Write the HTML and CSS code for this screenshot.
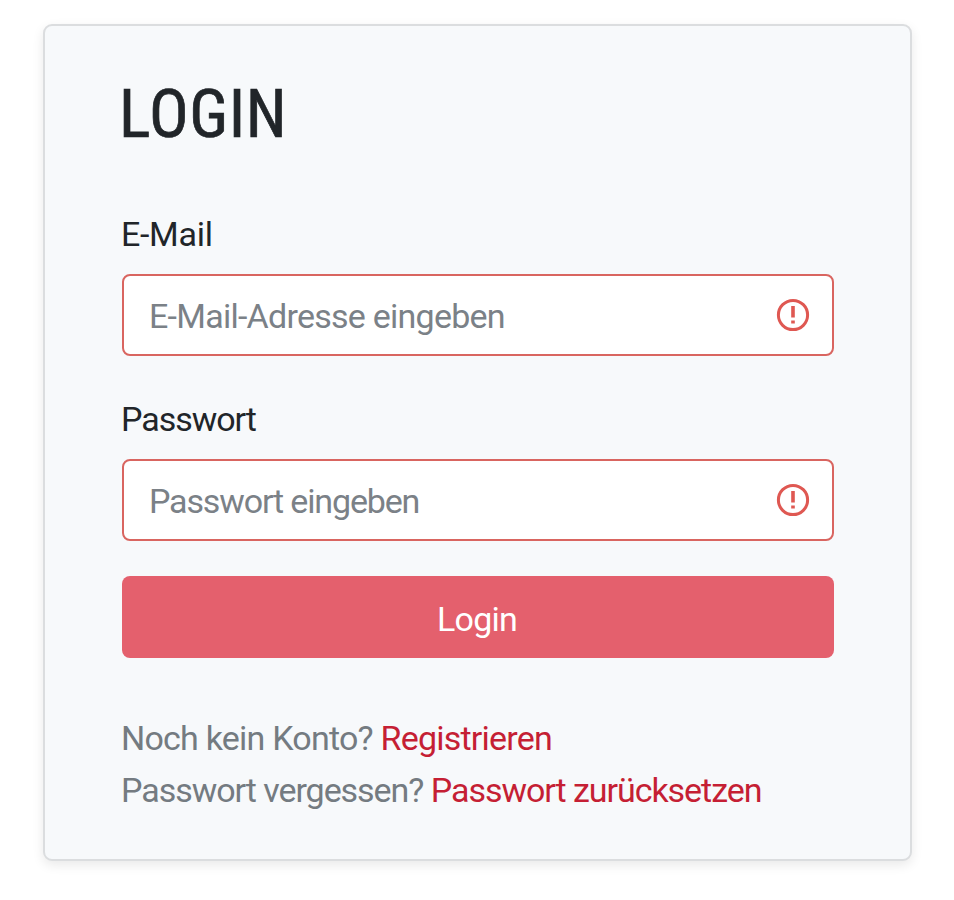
FILE: index.html
```html
<!DOCTYPE html>
<html lang="de">
<head>
    <meta charset="UTF-8">
    <meta name="viewport" content="width=device-width, initial-scale=1.0">
    <title>Login</title>
    <link rel="stylesheet" href="styles.css">
</head>
<body>
    <div class="card">
        <h1>LOGIN</h1>
        <form id="loginForm" novalidate>
            <label for="email" class="email-label">E-Mail</label>
            <div class="field invalid">
                <input type="email" id="email" placeholder="E-Mail-Adresse eingeben">
                <svg class="error-icon" viewBox="0 0 34 34" aria-hidden="true">
                    <circle cx="17" cy="17" r="14.6"/>
                    <path d="M17 8v11.5M17 22.5v3"/>
                </svg>
            </div>

            <label for="password" class="tight">Passwort</label>
            <div class="field invalid">
                <input type="password" id="password" class="tight" placeholder="Passwort eingeben">
                <svg class="error-icon" viewBox="0 0 34 34" aria-hidden="true">
                    <circle cx="17" cy="17" r="14.6"/>
                    <path d="M17 8v11.5M17 22.5v3"/>
                </svg>
            </div>

            <button type="submit">Login</button>
        </form>

        <div class="links">
            <div class="link-row">Noch kein Konto? <a href="#">Registrieren</a></div>
            <div class="link-row tight">Passwort vergessen? <a href="#">Passwort zurücksetzen</a></div>
        </div>
    </div>
</body>
</html>
```
FILE: styles.css
```css
* {
    box-sizing: border-box;
}

body {
    font-family: Roboto, "Liberation Sans", sans-serif;
    font-size: 34px;
    line-height: 52px;
    letter-spacing: -0.78px;
    color: #212529;
    background-color: #fff;
    min-height: 100vh;
    margin: 0;
    padding: 24px 0 0 43px;
}

.card {
    width: 869px;
    height: 837px;
    padding: 47px 76px 0 77px;
    background-color: #f7f9fb;
    border: 2px solid #dbdddf;
    border-radius: 9px;
    box-shadow: 0 4px 12px rgba(0, 0, 0, 0.09);
}

h1 {
    margin: 0 0 53px -3px;
    padding-top: 2px;
    font-size: 66px;
    font-weight: 400;
    font-stretch: 75%;
    letter-spacing: 0.6px;
    line-height: 80px;
    -webkit-text-stroke: 0.7px #212529;
}

label {
    display: block;
    margin: 0 0 14px -1px;
}

.email-label {
    letter-spacing: -0.3px;
}

.tight {
    letter-spacing: -1.05px;
}

/* Input with the validation icon on the right */
.field {
    display: flex;
    align-items: center;
    height: 82px;
    margin-bottom: 37px;
    padding: 0 22px 0 25px;
    background-color: #fff;
    border: 2px solid #ced4da;
    border-radius: 8px;
}

.field.invalid {
    border-color: #d96560;
}

.field input {
    flex: 1;
    min-width: 0;
    padding: 2px 0 0;
    border: none;
    outline: none;
    background: none;
    font: inherit;
    letter-spacing: -0.75px;
    color: inherit;
}

.field input.tight {
    letter-spacing: -1.15px;
}

.field input::placeholder {
    color: #7b8187;
    opacity: 1;
}

.error-icon {
    width: 34px;
    height: 34px;
    fill: none;
    stroke: #df5852;
    stroke-width: 3;
}

.error-icon path {
    stroke-width: 3.6;
}

button {
    display: block;
    width: 100%;
    height: 82px;
    margin-top: -2px;
    padding: 4px 2px 0 0;
    background-color: #e4606d;
    color: #fff;
    border: none;
    border-radius: 8px;
    font: inherit;
    letter-spacing: -0.8px;
    cursor: pointer;
}

.links {
    margin: 54px 0 0 -1px;
    color: #747b81;
}

.link-row {
    white-space: nowrap;
}

.links a {
    color: #c51f34;
    text-decoration: none;
}
```
